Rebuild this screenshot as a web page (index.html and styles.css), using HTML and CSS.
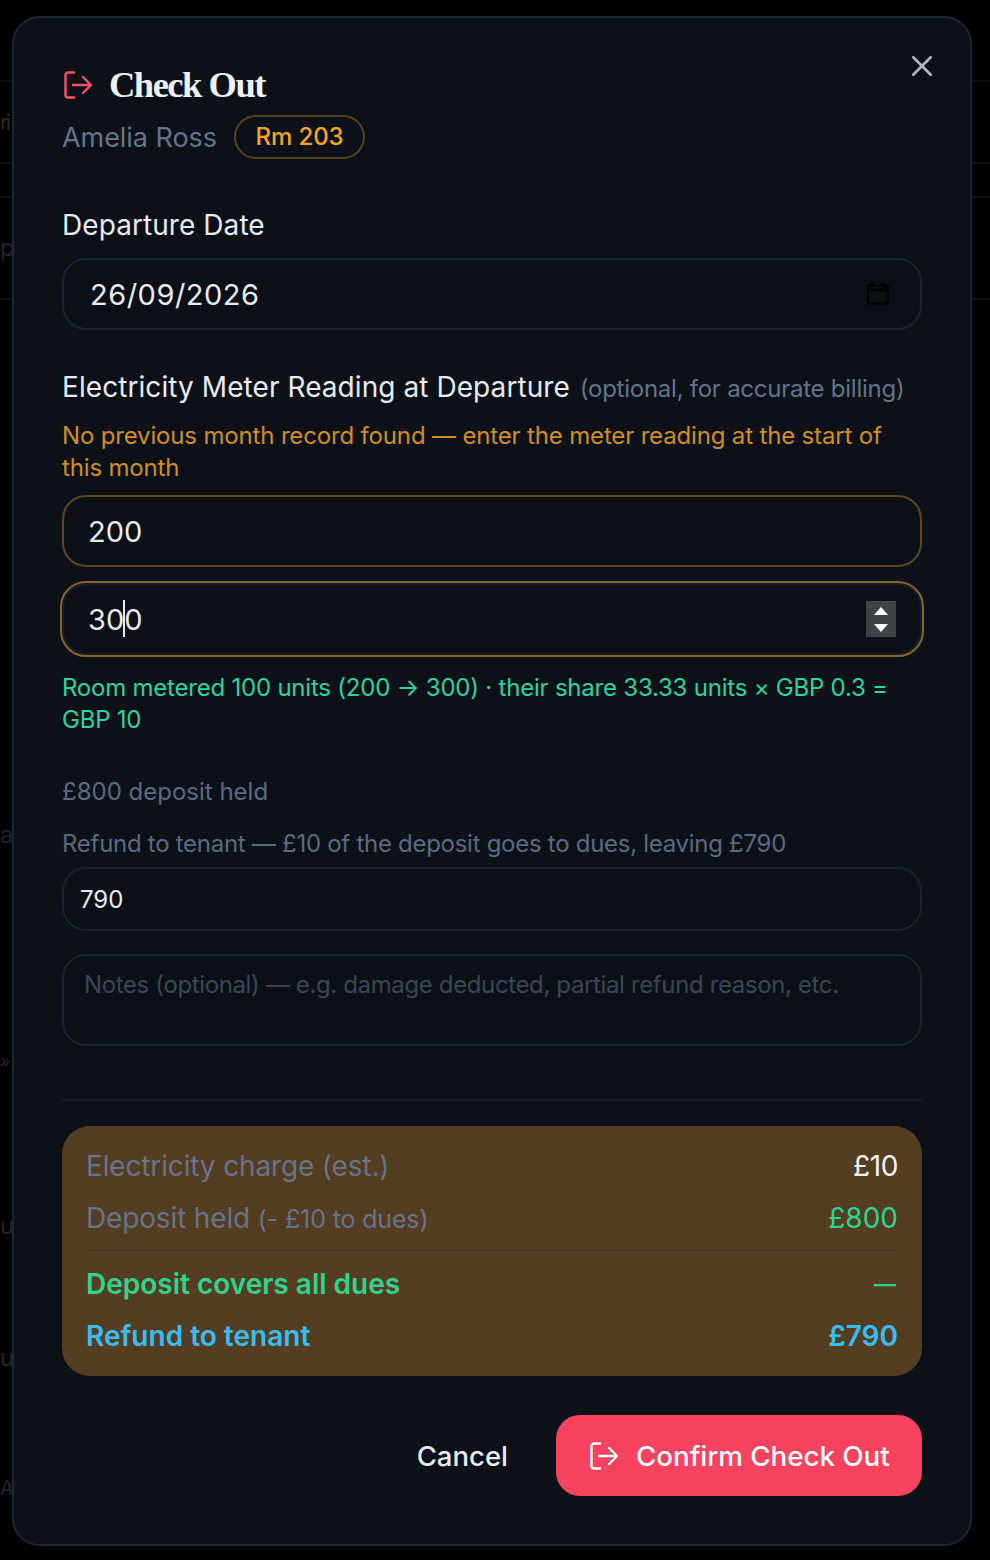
FILE: index.html
```html
<!DOCTYPE html>
<html lang="en">
<head>
<meta charset="utf-8">
<title>Check Out</title>
<link rel="stylesheet" href="styles.css">
</head>
<body>
<div class="backdrop">
  <div class="ghost g1">ri</div>
  <div class="ghost g2">p</div>
  <div class="ghost g3">a</div>
  <div class="ghost g6">»</div>
  <div class="ghost g4">u</div>
  <div class="ghost g5">u</div>
  <div class="ghost g7">Au</div>
</div>
<section class="modal">
  <button class="close" aria-label="Close">
    <svg viewBox="0 0 24 24" width="28" height="28"><path d="M4.500 4.500l15 15M19.500 4.500l-15 15"/></svg>
  </button>
  <header class="head">
    <h1 class="title">
      <svg class="exit" viewBox="0 0 28 28" width="28" height="28"><path d="M10 1.500H4a2.500 2.500 0 0 0-2.500 2.500v20A2.500 2.500 0 0 0 4 26.500h6M9 14h18M19 6l8 8-8 8"/></svg>
      Check Out
    </h1>
    <div class="sub"><span class="name">Amelia Ross</span><span class="badge">Rm 203</span></div>
  </header>

  <label class="label l-date">Departure Date</label>
  <div class="field-wrap">
    <input class="field date" type="text" value="26/09/2026">
    <svg class="cal" viewBox="0 0 24 24" width="22" height="24" preserveAspectRatio="none"><path d="M1.500 4.500h21v18h-21zM1.500 9h21M6 1v4M18 1v4"/></svg>
  </div>

  <div class="label l-meter">Electricity Meter Reading at Departure <span class="opt">(optional, for accurate billing)</span></div>
  <p class="warn">No previous month record found — enter the meter reading at the start of this month</p>
  <input class="field meter" type="text" value="200">
  <div class="field-wrap focus-wrap">
    <input class="field meter focused" type="text" value="300">
    <span class="caret"></span>
    <span class="spin"><i class="up"></i><i class="down"></i></span>
  </div>
  <p class="ok">Room metered 100 units (200 → 300) · their share 33.33 units × GBP 0.3 = GBP 10</p>

  <p class="muted held">£800 deposit held</p>
  <p class="muted refund">Refund to tenant — £10 of the deposit goes to dues, leaving £790</p>
  <input class="field small" type="text" value="790">
  <textarea class="notes" placeholder="Notes (optional) — e.g. damage deducted, partial refund reason, etc."></textarea>
  <hr class="rule">

  <div class="summary">
    <div class="row r1"><span class="k">Electricity charge (est.)</span><span class="v">£10</span></div>
    <div class="row r2"><span class="k">Deposit held <small>(- £10 to dues)</small></span><span class="v green">£800</span></div>
    <div class="row r3"><span class="green strong">Deposit covers all dues</span><span class="green strong dash">—</span></div>
    <div class="row r4"><span class="blue strong">Refund to tenant</span><span class="blue strong">£790</span></div>
  </div>

  <footer class="actions">
    <button class="cancel">Cancel</button>
    <button class="confirm">
      <svg viewBox="0 0 28 28" width="28" height="28"><path d="M10 1.500H4a2.500 2.500 0 0 0-2.500 2.500v20A2.500 2.500 0 0 0 4 26.500h6M9 14h18M19 6l8 8-8 8"/></svg>
      Confirm Check Out
    </button>
  </footer>
</section>
</body>
</html>
```
FILE: styles.css
```css
* { box-sizing: border-box; }
html, body { margin: 0; height: 1560px; background: #000; overflow: hidden; }
body { position: relative; font-family: Inter, "Noto Sans", sans-serif; color: #e8eaf6; }

.backdrop {
  height: 1560px;
  background:
    linear-gradient(#0b0f14, #0b0f14) 0 80px / 100% 2px no-repeat,
    linear-gradient(#0b0f14, #0b0f14) 0 162px / 100% 2px no-repeat,
    linear-gradient(#0b0f14, #0b0f14) 0 196px / 100% 2px no-repeat,
    linear-gradient(#0b0f14, #0b0f14) 0 298px / 100% 2px no-repeat,
    #000;
}
.ghost { position: absolute; left: 0; font-size: 24px; line-height: 30px; color: #1e2530; }
.g1 { top: 107px; font-size: 22px; letter-spacing: -3px; color: #2c2a24; }
.g2 { top: 233px; }
.g3 { top: 820px; }
.g6 { top: 1046px; font-size: 18px; }
.g4 { top: 1211px; }
.g5 { top: 1343px; }
.g7 { top: 1473px; font-size: 20px; letter-spacing: -6px; }

.modal {
  position: absolute; left: 12px; top: 16px;
  width: 960px; height: 1530px;
  padding: 47px 48px 0;
  background: #0c1118;
  border: 2px solid #1d2733;
  border-radius: 28px;
}
.close { position: absolute; right: 34px; top: 34px; width: 28px; height: 28px; padding: 0; background: none; border: 0; }
.close svg { display: block; }
.close path { fill: none; stroke: #b4b8c2; stroke-width: 2.200; stroke-linecap: round; }

.title { display: flex; align-items: center; gap: 17px; margin: 0; height: 40px; padding-left: 2px; font: 700 36.500px/40px "Liberation Serif", serif; letter-spacing: -1.500px; color: #eef0fa; }
.exit { flex: none; }
.exit path { fill: none; stroke: #f7506a; stroke-width: 2.400; stroke-linecap: round; stroke-linejoin: round; }
.sub { display: flex; align-items: center; gap: 17px; margin-top: 10px; }
.name { font-size: 27px; color: #64748b; letter-spacing: -.05px; }
.badge { height: 44px; padding: 0 19.500px; border: 2px solid #57421f; border-radius: 22px; font-size: 24px; font-weight: 500; line-height: 40px; letter-spacing: -.1px; color: #f5a623; }

.label { display: block; font-size: 28px; line-height: 36px; color: #e8eaf6; letter-spacing: .07px; white-space: nowrap; }
.l-date { margin-top: 48px; }
.l-meter { margin-top: 39px; }
.opt { font-size: 24px; color: #64748b; margin-left: 2px; letter-spacing: -.25px; }

.field-wrap { position: relative; }
.field { display: block; width: 100%; background: #0b1016; border: 2px solid #1a222d; border-radius: 24px; font-family: inherit; color: #e8eaf6; outline: 0; }
.date { height: 72px; margin-top: 15px; padding: 0 26px; font-size: 29px; letter-spacing: .5px; }
.cal { position: absolute; right: 33px; top: 23px; }
.cal path { fill: none; stroke: #020304; stroke-width: 2.600; }

.warn, .ok { margin: 0; font-size: 24px; line-height: 32px; }
.warn { margin-top: 13px; letter-spacing: -.16px; color: #cf8f22; }
.meter { height: 72px; margin-top: 11px; padding: 0 24px; font-size: 29px; border-color: #5e4720; }
.focus-wrap { margin-top: 14px; }
.focused { height: 76px; width: 864px; margin: 0 0 0 -2px; padding: 0 26px; border-color: #8a6428; box-shadow: inset 0 0 0 2px #151d28; border-radius: 26px; }
.caret { position: absolute; left: 61px; top: 19px; width: 2px; height: 37px; background: #e8eaf6; }
.spin { position: absolute; right: 26px; top: 20px; width: 30px; height: 36px; background: #3e4348; display: flex; flex-direction: column; align-items: center; justify-content: center; gap: 9px; }
.spin i { width: 0; height: 0; border-left: 7px solid transparent; border-right: 7px solid transparent; }
.spin .up { border-bottom: 8px solid #fff; }
.spin .down { border-top: 8px solid #fff; }
.ok { margin-top: 15px; letter-spacing: -.22px; color: #2dd4a0; }

.muted { margin: 0; font-size: 24px; line-height: 32px; color: #5b6a80; }
.held { margin-top: 40px; }
.refund { margin-top: 20px; letter-spacing: -.28px; }
.small { height: 64px; margin-top: 7px; padding: 0 16px; font-size: 24px; }
.notes { display: block; width: 100%; height: 92px; margin-top: 23px; padding: 13px 20px; resize: none; background: #0b1016; border: 2px solid #1a222d; border-radius: 24px; font: 24px/32px Inter, sans-serif; letter-spacing: -.37px; outline: 0; }
.notes::placeholder { color: #3b4655; opacity: 1; }
.rule { height: 2px; margin: 53px 0 25px; border: 0; background: #141b24; }

.summary { height: 250px; padding: 20px 24px 0; background: #543d20; border-radius: 28px; }
.row { display: flex; justify-content: space-between; align-items: center; }
.r1 { height: 40px; }
.r2 { height: 40px; margin-top: 12px; }
.r3 { height: 40px; margin-top: 26px; position: relative; }
.r3::before { content: ""; position: absolute; left: 0; right: 0; top: -15px; height: 2px; background: #463923; }
.r4 { height: 40px; margin-top: 12px; }
.k { font-size: 28px; color: #66748c; letter-spacing: -.15px; }
.k small { font-size: 25px; }
.v { font-size: 28px; color: #f1f2f7; }
.r1 .v { letter-spacing: -.4px; }
.green { color: #2dd48f; }
.blue { color: #38bdf8; }
.strong { font-size: 28px; font-weight: 600; }
.dash { font-size: 22px; margin-right: 2px; }

.actions { display: flex; justify-content: flex-end; align-items: center; margin-top: 39px; gap: 48px; }
.cancel { padding: 0; background: none; border: 0; font: 450 27.500px Inter, sans-serif; color: #e8eaf6; }
.confirm { display: flex; align-items: center; gap: 18px; width: 366px; height: 81px; padding: 0 34px; background: #f7435f; border: 0; border-radius: 24px; font: 450 27.700px Inter, sans-serif; color: #fff; white-space: nowrap; }
.confirm svg { flex: none; }
.confirm path { fill: none; stroke: #fff; stroke-width: 2.400; stroke-linecap: round; stroke-linejoin: round; }
```
